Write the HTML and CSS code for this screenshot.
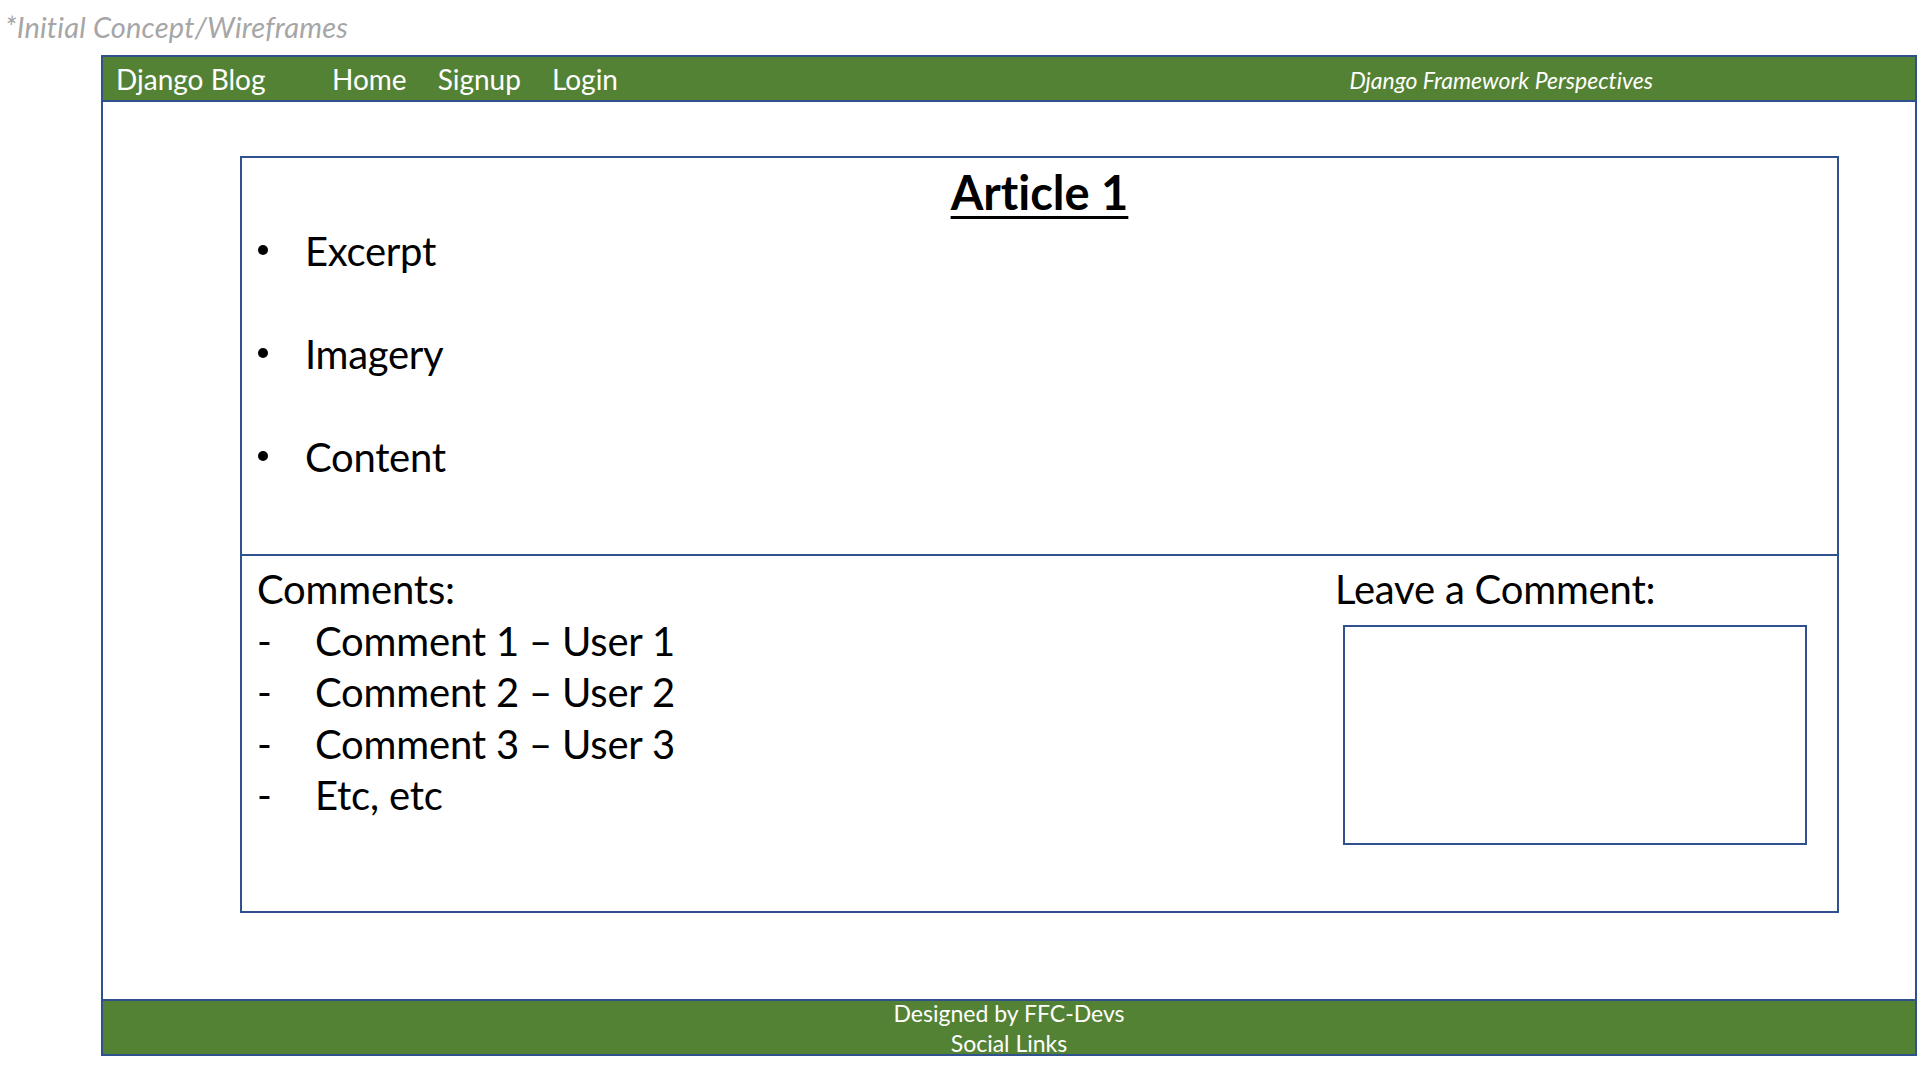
FILE: index.html
```html
<!DOCTYPE html>
<html lang="en">
<head>
<meta charset="utf-8">
<title>Django Blog Wireframe</title>
<link rel="stylesheet" href="styles.css">
</head>
<body>
<div class="caption">*Initial Concept/Wireframes</div>
<div class="frame">
  <header class="nav">
    <span class="brand">Django Blog</span>
    <nav class="links">
      <span class="link">Home</span>
      <span class="link">Signup</span>
      <span class="link">Login</span>
    </nav>
    <span class="tagline">Django Framework Perspectives</span>
  </header>
  <main class="main">
    <section class="article">
      <div class="article-top">
        <h1 class="title">Article 1</h1>
        <ul class="bullets">
          <li class="bullet">Excerpt</li>
          <li class="bullet">Imagery</li>
          <li class="bullet">Content</li>
        </ul>
      </div>
      <div class="article-bottom">
        <div class="comments">
          <div class="comments-head">Comments:</div>
          <div class="comment"><span class="dash">-</span><span>Comment 1 – User 1</span></div>
          <div class="comment"><span class="dash">-</span><span>Comment 2 – User 2</span></div>
          <div class="comment"><span class="dash">-</span><span>Comment 3 – User 3</span></div>
          <div class="comment"><span class="dash">-</span><span>Etc, etc</span></div>
        </div>
        <div class="leave">
          <div class="leave-head">Leave a Comment:</div>
          <div class="textbox"></div>
        </div>
      </div>
    </section>
  </main>
  <footer class="footer">
    <div>Designed by FFC-Devs</div>
    <div>Social Links</div>
  </footer>
</div>
</body>
</html>
```

FILE: styles.css
```css
* { box-sizing: border-box; }
html, body { margin: 0; padding: 0; background: #fff; }
body {
  font-family: Lato, "Open Sans", "DejaVu Sans", sans-serif;
  font-variant-ligatures: none;
  color: #000;
  width: 1931px;
  height: 1079px;
  overflow: hidden;
}
.caption {
  font-style: italic;
  color: #a6a6a6;
  font-size: 29px;
  letter-spacing: 0.2px;
  line-height: 34px;
  padding-left: 5px;
  height: 55px;
  padding-top: 10px;
}
.frame {
  margin-left: 101px;
  width: 1816px;
  height: 1001px;
  border: 2px solid #2f528f;
  display: flex;
  flex-direction: column;
}
.nav {
  background: #548235;
  border-bottom: 2px solid #2f528f;
  height: 45px;
  display: flex;
  align-items: center;
  color: #fff;
  padding-left: 13px;
}
.brand {
  font-size: 28px;
  width: 216px;
}
.links {
  display: flex;
  gap: 31px;
  font-size: 28px;
}
.tagline {
  margin-left: auto;
  margin-right: 262px;
  font-size: 23px;
  font-style: italic;
  padding-top: 2px;
}
.main {
  flex: 1;
  padding: 54px 76px 0 137px;
}
.article {
  border: 2px solid #2f528f;
  height: 757px;
  display: flex;
  flex-direction: column;
}
.article-top {
  height: 398px;
  border-bottom: 2px solid #2f528f;
  padding-top: 6px;
}
.title {
  margin: 0;
  text-align: center;
  font-size: 47px;
  font-weight: 700;
  line-height: 57px;
  text-decoration: underline;
  text-decoration-thickness: 3px;
  text-underline-offset: 6px;
}
.bullets {
  list-style: none;
  margin: 5px 0 0;
  padding: 0 0 0 16px;
  font-size: 40px;
  letter-spacing: -0.3px;
}
.bullet {
  display: flex;
  align-items: flex-start;
  line-height: 50px;
  height: 50px;
  margin-bottom: 53px;
}
.bullet::before {
  content: "";
  width: 10px;
  height: 10px;
  border-radius: 50%;
  background: #000;
  margin-top: 19px;
  margin-right: 37px;
  flex: none;
}
.article-bottom {
  flex: 1;
  display: grid;
  grid-template-columns: 1fr 502px;
  font-size: 40px;
  letter-spacing: -0.2px;
  line-height: 51.5px;
  padding-top: 8px;
}
.comments {
  padding-left: 15px;
}
.comment {
  display: flex;
}
.dash {
  width: 58px;
  flex: none;
}
.textbox {
  margin-top: 9px;
  margin-left: 8px;
  width: 464px;
  height: 220px;
  border: 2px solid #2f528f;
}
.footer {
  background: #548235;
  border-top: 2px solid #2f528f;
  height: 55px;
  color: #fff;
  font-size: 23px;
  line-height: 30px;
  display: flex;
  flex-direction: column;
  justify-content: center;
  align-items: center;
}
```
